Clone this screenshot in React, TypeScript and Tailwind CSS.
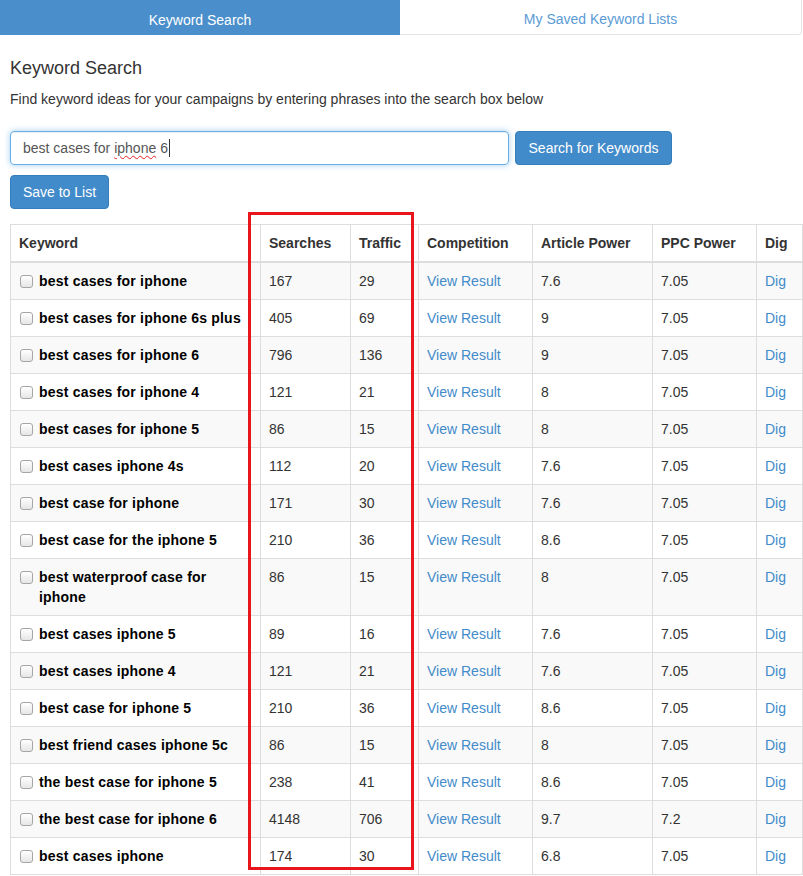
import React from "react";

const rows: [string, string, string, string, string][] = [
  ["best cases for iphone", "167", "29", "7.6", "7.05"],
  ["best cases for iphone 6s plus", "405", "69", "9", "7.05"],
  ["best cases for iphone 6", "796", "136", "9", "7.05"],
  ["best cases for iphone 4", "121", "21", "8", "7.05"],
  ["best cases for iphone 5", "86", "15", "8", "7.05"],
  ["best cases iphone 4s", "112", "20", "7.6", "7.05"],
  ["best case for iphone", "171", "30", "7.6", "7.05"],
  ["best case for the iphone 5", "210", "36", "8.6", "7.05"],
  ["best waterproof case for iphone", "86", "15", "8", "7.05"],
  ["best cases iphone 5", "89", "16", "7.6", "7.05"],
  ["best cases iphone 4", "121", "21", "7.6", "7.05"],
  ["best case for iphone 5", "210", "36", "8.6", "7.05"],
  ["best friend cases iphone 5c", "86", "15", "8", "7.05"],
  ["the best case for iphone 5", "238", "41", "8.6", "7.05"],
  ["the best case for iphone 6", "4148", "706", "9.7", "7.2"],
  ["best cases iphone", "174", "30", "6.8", "7.05"],
];

const th = "border border-[#ddd] border-b-2 px-2 py-2 text-left font-bold text-[#333] align-bottom leading-5";
const td = "border border-[#ddd] px-2 py-2 align-top leading-5";

export default function App() {
  return (
    <div className="relative w-[803px] min-h-[876px] bg-white text-[14px] text-[#333]" style={{ fontFamily: '"Liberation Sans", Arial, sans-serif' }}>
      <div className="flex h-[35px] w-[803px]">
        <div className="flex w-[400px] items-center justify-center bg-[#4a8fcc] pt-[5px] text-white">Keyword Search</div>
        <div className="flex w-[402px] items-center justify-center rounded-br-[4px] border-b border-r border-[#e3e3e3] pt-[5px] text-[#5b9bd5]">My Saved Keyword Lists</div>
      </div>
      <div className="pl-[10px] pr-[1px]">
        <h2 className="mt-[23px] text-[18px] leading-5 text-[#333]">Keyword Search</h2>
        <p className="mt-[11px] leading-5">Find keyword ideas for your campaigns by entering phrases into the search box below</p>
        <div className="mt-[22px] flex gap-[6px]">
          <div className="flex h-[34px] w-[499px] items-center rounded-[4px] border border-[#66afe9] px-3 text-[#555] shadow-[inset_0_1px_1px_rgba(0,0,0,0.075),0_0_6px_rgba(102,175,233,0.6)]">
            <span>best cases for </span>
            <span className="ml-[4px] underline decoration-wavy decoration-[#e02020] decoration-1 underline-offset-2">iphone</span>
            <span className="ml-[4px]">6</span>
            <span className="ml-[1px] inline-block h-[18px] w-px bg-[#333]" />
          </div>
          <button className="h-[34px] w-[157px] rounded-[4px] border border-[#357ebd] bg-[#428bca] text-white">Search for Keywords</button>
        </div>
        <button className="mt-[10px] h-[34px] w-[99px] rounded-[4px] border border-[#357ebd] bg-[#428bca] text-white">Save to List</button>
        <table className="mt-[15px] w-[792px] table-fixed border-collapse border border-[#ddd]">
          <colgroup>
            <col className="w-[250px]" />
            <col className="w-[90px]" />
            <col className="w-[68px]" />
            <col className="w-[114px]" />
            <col className="w-[120px]" />
            <col className="w-[104px]" />
            <col className="w-[46px]" />
          </colgroup>
          <thead>
            <tr>
              <th className={th}>Keyword</th>
              <th className={th}>Searches</th>
              <th className={th}>Traffic</th>
              <th className={th}>Competition</th>
              <th className={th}>Article Power</th>
              <th className={th}>PPC Power</th>
              <th className={th}>Dig</th>
            </tr>
          </thead>
          <tbody>
            {rows.map((r, i) => (
              <tr key={i} className={i % 2 === 0 ? "bg-[#f9f9f9]" : "bg-white"}>
                <td className={td}>
                  <div className="flex items-start">
                    <span className="ml-[1px] mr-[6px] mt-[4px] inline-block h-[13px] w-[13px] shrink-0 rounded-[3px] border border-[#a6a6a6] bg-gradient-to-b from-white to-[#e6e6e6]" />
                    <span className="font-bold tracking-[0.2px] text-black">{r[0]}</span>
                  </div>
                </td>
                <td className={td}>{r[1]}</td>
                <td className={td}>{r[2]}</td>
                <td className={td}><span className="text-[#428bca]">View Result</span></td>
                <td className={td}>{r[3]}</td>
                <td className={td}>{r[4]}</td>
                <td className={td}><span className="text-[#428bca]">Dig</span></td>
              </tr>
            ))}
          </tbody>
        </table>
      </div>
      <div className="absolute left-[248px] top-[212px] h-[658px] w-[166px] border-[3px] border-[#e8151b]" />
    </div>
  );
}
